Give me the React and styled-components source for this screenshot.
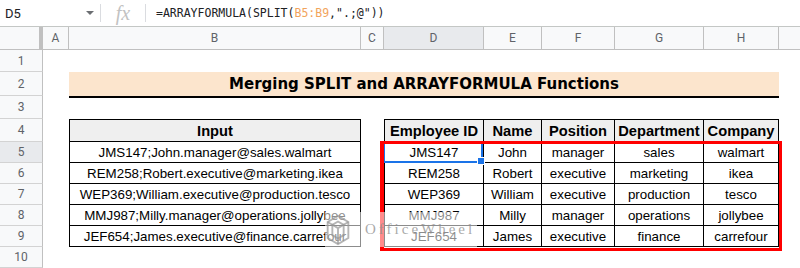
import React from 'react';
import styled, { createGlobalStyle } from 'styled-components';

const GlobalStyle = createGlobalStyle`
  body {
    margin: 0;
    background: #fff;
    overflow: hidden;
  }
`;

const Sheet = styled.div`
  width: 800px;
  height: 268px;
  overflow: hidden;
  font-family: 'Liberation Sans', Arial, sans-serif;
`;

const FormulaBar = styled.div`
  display: flex;
  align-items: center;
  height: 26px;
  border-bottom: 1px solid #c4c7c5;
`;

const NameBox = styled.div`
  width: 100px;
  display: flex;
  align-items: center;
  justify-content: space-between;
  padding: 0 6px 0 5px;
  box-sizing: border-box;
  font-family: Roboto, sans-serif;
  font-size: 13px;
  color: #202124;
`;

const Caret = styled.span`
  width: 0;
  height: 0;
  border-left: 4px solid transparent;
  border-right: 4px solid transparent;
  border-top: 4px solid #6b6e72;
`;

const Divider = styled.div`
  width: 1px;
  height: 18px;
  background: #dadce0;
`;

const Fx = styled.div`
  width: 44px;
  text-align: center;
  font-family: 'Liberation Serif', serif;
  font-style: italic;
  font-size: 20px;
  color: #c2c2c2;
`;

const Formula = styled.div`
  padding-left: 10px;
  font-family: 'DejaVu Sans Mono', monospace;
  font-size: 11.5px;
  color: #202124;
`;

const RangeRef = styled.span`
  color: #f2a45c;
`;

const Grid = styled.div`
  position: relative;
  display: grid;
  grid-template-columns: 43px 26px 292px 23px 100px 58px 73px 89px 75px 120px;
  grid-template-rows: 23px 22px 24px 23px 23px repeat(6, 21px);
`;

const Corner = styled.div`
  background: #f8f9fa;
  border-right: 4px solid #c0c0c0;
  border-bottom: 1px solid #c0c0c0;
`;

const ColHead = styled.div`
  display: flex;
  align-items: center;
  justify-content: center;
  background: ${({ $active }) => ($active ? '#e8eaed' : '#f8f9fa')};
  border-right: 1px solid #c0c0c0;
  border-bottom: 1px solid #c0c0c0;
  font-family: Roboto, sans-serif;
  font-size: 12px;
  color: #5f6368;
`;

const RowHead = styled(ColHead)`
  border-bottom-color: #d3d3d3;
`;

const Cell = styled.div`
  min-width: 0;
`;

const Title = styled.div`
  grid-column: span 7;
  display: flex;
  align-items: center;
  justify-content: center;
  margin-bottom: -2px;
  background: #fce5cd;
  border-bottom: 2px solid #000;
  font-family: 'DejaVu Sans', Verdana, sans-serif;
  font-weight: bold;
  font-size: 15px;
  color: #000;
  z-index: 1;
`;

const TableCell = styled.div`
  display: flex;
  align-items: center;
  justify-content: center;
  white-space: nowrap;
  overflow: hidden;
  background: ${({ $head }) => ($head ? '#efefef' : '#fff')};
  border-right: 1px solid #000;
  border-bottom: 1px solid #000;
  border-left: ${({ $first }) => ($first ? '1px solid #000' : 'none')};
  border-top: ${({ $head }) => ($head ? '1px solid #000' : 'none')};
  font-weight: ${({ $head }) => ($head ? 'bold' : 'normal')};
  font-size: ${({ $head }) => ($head ? '14.67px' : '13.33px')};
  color: #000;
`;

/* absolutely positioned grid children take their grid area as containing block
   and stay out of auto-placement */
const RedFrame = styled.div`
  position: absolute;
  grid-row: 6 / 11;
  grid-column: 5 / 10;
  inset: -1px -3px -4px -4px;
  border: 3px solid #f00;
  border-left-width: 4px;
  z-index: 3;
  pointer-events: none;
`;

const Selection = styled.div`
  position: absolute;
  grid-row: 6 / 7;
  grid-column: 5 / 6;
  inset: 0 1px 0 -1px;
  border: 2px solid #1a73e8;
  z-index: 2;
`;

const Handle = styled.span`
  position: absolute;
  right: -4px;
  bottom: -4px;
  width: 6px;
  height: 6px;
  background: #1a73e8;
  border: 1px solid #fff;
`;

const Watermark = styled.div`
  position: absolute;
  left: 325px;
  top: 185px;
  width: 152px;
  height: 35px;
  display: flex;
  align-items: center;
  gap: 14px;
  background: rgba(255, 255, 255, 0.55);
  z-index: 4;
`;

const WatermarkText = styled.span`
  font-family: 'Liberation Serif', serif;
  font-size: 15px;
  letter-spacing: 3px;
  color: rgba(140, 140, 140, 0.75);
`;

const cols = ['A', 'B', 'C', 'D', 'E', 'F', 'G', 'H', ''];

const inputs = [
  'JMS147;John.manager@sales.walmart',
  'REM258;Robert.executive@marketing.ikea',
  'WEP369;William.executive@production.tesco',
  'MMJ987;Milly.manager@operations.jollybee',
  'JEF654;James.executive@finance.carrefour',
];

const headers = ['Employee ID', 'Name', 'Position', 'Department', 'Company'];

const splitRow = (s) => s.split(/[.;@]/);

const Logo = () => (
  <svg width="26" height="32" viewBox="0 0 26 34" fill="none" stroke="rgba(150,150,150,0.7)" strokeWidth="2">
    <path d="M13 2 L24 8.5 V25.5 L13 32 L2 25.5 V8.5 Z" />
    <path d="M13 8 L19 11.5 V22.5 L13 26 L7 22.5 V11.5 Z" />
    <path d="M2 8.5 L13 15 L24 8.5 M13 15 V32" />
  </svg>
);

function renderRow(r) {
  const cells = [<RowHead key="h" $active={r === 5}>{r}</RowHead>];
  if (r === 2) {
    cells.push(<Cell key="a" />);
    cells.push(<Title key="t">Merging SPLIT and ARRAYFORMULA Functions</Title>);
    cells.push(<Cell key="i" />);
    return cells;
  }
  if (r >= 4 && r <= 9) {
    const head = r === 4;
    const values = head ? headers : splitRow(inputs[r - 5]);
    cells.push(<Cell key="a" />);
    cells.push(
      <TableCell key="b" $head={head} $first>
        {head ? 'Input' : inputs[r - 5]}
      </TableCell>,
    );
    cells.push(<Cell key="c" />);
    values.forEach((v, i) => {
      cells.push(
        <TableCell key={`o${i}`} $head={head} $first={i === 0}>
          {v}
        </TableCell>,
      );
    });
    cells.push(<Cell key="i" />);
    return cells;
  }
  cols.forEach((c, i) => cells.push(<Cell key={`e${i}`} />));
  return cells;
}

export default function App() {
  return (
    <Sheet>
      <GlobalStyle />
      <FormulaBar>
        <NameBox>
          D5
          <Caret />
        </NameBox>
        <Divider />
        <Fx>fx</Fx>
        <Divider />
        <Formula>
          =ARRAYFORMULA(SPLIT(<RangeRef>B5:B9</RangeRef>,&quot;.;@&quot;))
        </Formula>
      </FormulaBar>
      <Grid>
        <Corner />
        {cols.map((c, i) => (
          <ColHead key={`col${i}`} $active={c === 'D'}>{c}</ColHead>
        ))}
        {Array.from({ length: 10 }, (_, i) => (
          <React.Fragment key={i}>{renderRow(i + 1)}</React.Fragment>
        ))}
        <Selection>
          <Handle />
        </Selection>
        <RedFrame />
        <Watermark>
          <Logo />
          <WatermarkText>OfficeWheel</WatermarkText>
        </Watermark>
      </Grid>
    </Sheet>
  );
}
